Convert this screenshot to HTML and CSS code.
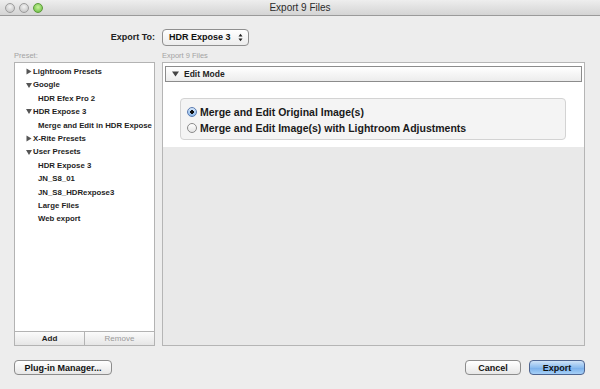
FILE: index.html
```html
<!DOCTYPE html>
<html lang="en">
<head>
    <meta charset="UTF-8">
    <title>Export 9 Files</title>
    <link rel="stylesheet" href="styles.css">
</head>
<body>
    <div class="window">
        <!-- Title bar -->
        <div class="titlebar">
            <div class="lights">
                <span class="light"></span>
                <span class="light"></span>
                <span class="light green"></span>
            </div>
            <span class="title">Export 9 Files</span>
            <span></span>
        </div>

        <div class="export-to">
            <label>Export To:</label>
            <div class="popup">
                <span>HDR Expose 3</span>
                <svg class="arrows" width="5" height="9" viewBox="0 0 5 9">
                    <path d="M0.5 3.5 L2.5 0.8 L4.5 3.5 Z M0.5 5.5 L2.5 8.2 L4.5 5.5 Z" fill="#222"/>
                </svg>
            </div>
        </div>

        <div class="main">
            <!-- Preset tree -->
            <div class="preset-col">
                <div class="caption">Preset:</div>
                <div class="tree">
                    <div class="row folder"><svg class="tri" width="6" height="7" viewBox="0 0 6 7"><path d="M0.5 0.5 L5.5 3.5 L0.5 6.5 Z" fill="#555"/></svg>Lightroom Presets</div>
                    <div class="row folder"><svg class="tri" width="6" height="7" viewBox="0 0 6 7"><path d="M0 1 L6 1 L3 6 Z" fill="#555"/></svg>Google</div>
                    <div class="row item">HDR Efex Pro 2</div>
                    <div class="row folder"><svg class="tri" width="6" height="7" viewBox="0 0 6 7"><path d="M0 1 L6 1 L3 6 Z" fill="#555"/></svg>HDR Expose 3</div>
                    <div class="row item">Merge and Edit in HDR Expose</div>
                    <div class="row folder"><svg class="tri" width="6" height="7" viewBox="0 0 6 7"><path d="M0.5 0.5 L5.5 3.5 L0.5 6.5 Z" fill="#555"/></svg>X-Rite Presets</div>
                    <div class="row folder"><svg class="tri" width="6" height="7" viewBox="0 0 6 7"><path d="M0 1 L6 1 L3 6 Z" fill="#555"/></svg>User Presets</div>
                    <div class="row item">HDR Expose 3</div>
                    <div class="row item">JN_S8_01</div>
                    <div class="row item">JN_S8_HDRexpose3</div>
                    <div class="row item">Large Files</div>
                    <div class="row item">Web export</div>
                </div>
                <div class="tree-buttons">
                    <button class="tree-btn">Add</button>
                    <button class="tree-btn disabled">Remove</button>
                </div>
            </div>

            <!-- Settings -->
            <div class="settings-col">
                <div class="caption">Export 9 Files</div>
                <div class="settings">
                    <div class="section">
                        <div class="section-header">
                            <svg class="tri" width="7" height="6" viewBox="0 0 7 6"><path d="M0 0.5 L7 0.5 L3.5 5.5 Z" fill="#444"/></svg>
                            Edit Mode
                        </div>
                        <div class="radio-group">
                            <div class="radio-row">
                                <span class="radio checked"></span>
                                <span>Merge and Edit Original Image(s)</span>
                            </div>
                            <div class="radio-row">
                                <span class="radio"></span>
                                <span>Merge and Edit Image(s) with Lightroom Adjustments</span>
                            </div>
                        </div>
                    </div>
                </div>
            </div>
        </div>

        <div class="footer">
            <button class="btn plugin">Plug-in Manager...</button>
            <div class="footer-right">
                <button class="btn cancel">Cancel</button>
                <button class="btn primary">Export</button>
            </div>
        </div>
    </div>
</body>
</html>
```

FILE: styles.css
```css
/* General */
body {
    margin: 0;
    padding: 0;
    background-color: #ededed;
    font-family: 'Liberation Sans', Arial, sans-serif;
    color: #1d1d1d;
}

.window {
    width: 600px;
    height: 389px;
    background-color: #ededed;
    overflow: hidden;
}

/* Title bar */
.titlebar {
    height: 16px;
    display: grid;
    grid-template-columns: 1fr auto 1fr;
    align-items: center;
    background: linear-gradient(#eeeeee, #d4d4d4);
    border-bottom: 1px solid #9a9a9a;
    box-sizing: border-box;
}

.lights {
    display: flex;
    gap: 4px;
    padding-left: 5px;
}

.light {
    width: 10px;
    height: 10px;
    border-radius: 50%;
    box-sizing: border-box;
    border: 1px solid #9c9c9c;
    background: radial-gradient(circle at 50% 35%, #f2f2f2, #bdbdbd);
}

.light.green {
    border-color: #5c9a3a;
    background: radial-gradient(circle at 50% 40%, #c8f39a, #5fb83a);
}

.title {
    font-size: 10px;
    color: #2b2b2b;
}

/* Export To row */
.export-to {
    display: flex;
    align-items: center;
    margin: 12px 0 0 14px;
    height: 18px;
}

.export-to label {
    width: 141px;
    text-align: right;
    font-size: 9px;
    font-weight: bold;
    color: #222;
}

.popup {
    margin-left: 7px;
    width: 87px;
    height: 17px;
    box-sizing: border-box;
    border: 1px solid #8f8f8f;
    border-radius: 4px;
    background: linear-gradient(#ffffff, #ececec);
    display: flex;
    align-items: center;
    justify-content: space-between;
    padding: 0 5px 0 6px;
    font-size: 9px;
    font-weight: bold;
    color: #111;
}

/* Main columns */
.main {
    display: flex;
    gap: 7px;
    margin: 4px 15px 0 14px;
}

.caption {
    height: 12px;
    font-size: 7.5px;
    color: #a3a3a3;
    line-height: 12px;
}

.preset-col {
    width: 141px;
    display: flex;
    flex-direction: column;
}

.tree {
    height: 270px;
    box-sizing: border-box;
    background-color: #ffffff;
    border: 1px solid #b3b3b3;
    padding-top: 2px;
}

.row {
    height: 13.4px;
    line-height: 13.4px;
    font-size: 7.8px;
    font-weight: bold;
    color: #1e1e1e;
    white-space: nowrap;
    display: flex;
    align-items: center;
}

.row.folder {
    padding-left: 11px;
}

.row.folder .tri {
    margin-right: 1px;
}

.row.item {
    padding-left: 23px;
}

.tree-buttons {
    display: flex;
    height: 14px;
}

.tree-btn {
    flex: 1;
    height: 14px;
    margin: 0;
    padding: 0;
    border: 1px solid #b3b3b3;
    border-top: none;
    background: linear-gradient(#fbfbfb, #e6e6e6);
    font-family: 'Liberation Sans', Arial, sans-serif;
    font-size: 8px;
    font-weight: bold;
    color: #1e1e1e;
}

.tree-btn + .tree-btn {
    border-left: none;
}

.tree-btn.disabled {
    color: #9a9a9a;
    font-weight: normal;
}

.settings-col {
    flex: 1;
    display: flex;
    flex-direction: column;
}

.settings {
    height: 284px;
    box-sizing: border-box;
    border: 1px solid #b5b5b5;
    background-color: #e9e9e9;
}

.section {
    background-color: #ffffff;
    padding: 3px 2px 7px 2px;
}

.section-header {
    height: 16px;
    box-sizing: border-box;
    border: 1px solid #8c8c8c;
    background: linear-gradient(#ffffff, #ececec);
    display: flex;
    align-items: center;
    gap: 5px;
    padding-left: 6px;
    font-size: 8.5px;
    font-weight: bold;
    color: #1e1e1e;
}

.radio-group {
    margin: 16px 16px 0 15px;
    height: 42px;
    box-sizing: border-box;
    border: 1px solid #d3d3d3;
    border-radius: 4px;
    background-color: #f4f4f4;
    padding: 5px 0 0 6px;
}

.radio-row {
    height: 16px;
    display: flex;
    align-items: center;
    gap: 3px;
    font-size: 10.5px;
    font-weight: bold;
    color: #1a1a1a;
    white-space: nowrap;
}

.radio {
    width: 10px;
    height: 10px;
    box-sizing: border-box;
    border-radius: 50%;
    border: 1px solid #8a8a8a;
    background: linear-gradient(#ffffff, #e4e4e4);
}

.radio.checked {
    border-color: #5b7bb0;
    background: radial-gradient(circle, #111 0 1.6px, transparent 2.1px),
                linear-gradient(#d4e6fa, #8bb8ea);
}

/* Footer */
.footer {
    display: flex;
    justify-content: space-between;
    align-items: center;
    margin: 14px 15px 0 14px;
}

.footer-right {
    display: flex;
    gap: 8px;
}

.btn {
    height: 15px;
    margin: 0;
    padding: 0 8px;
    box-sizing: border-box;
    border: 1px solid #8c8c8c;
    border-radius: 4px;
    background: linear-gradient(#ffffff, #e7e7e7);
    font-family: 'Liberation Sans', Arial, sans-serif;
    font-size: 9px;
    font-weight: bold;
    color: #111;
}

.btn.plugin {
    width: 98px;
}

.btn.cancel {
    width: 56px;
}

.btn.primary {
    width: 56px;
    border-color: #4d6490;
    background: linear-gradient(#cfe3f8, #8dbdef 50%, #78aeea 51%, #a6d0f7);
}
```
